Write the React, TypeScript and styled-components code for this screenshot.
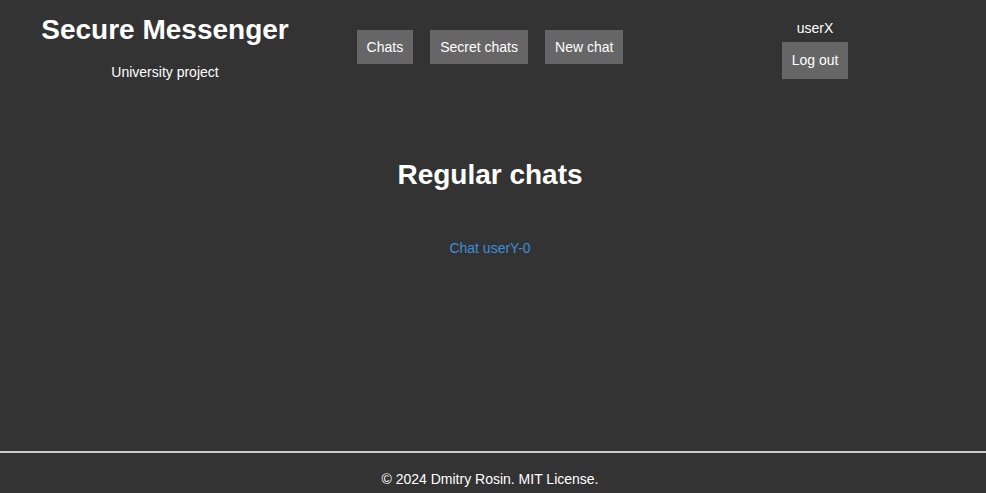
import React from "react";
import styled, { createGlobalStyle } from "styled-components";

const GlobalStyle = createGlobalStyle`
  html, body {
    margin: 0;
    padding: 0;
    background: #333333;
    color: #ffffff;
    font-family: "Liberation Sans", Arial, sans-serif;
  }
  * { box-sizing: border-box; }
`;

const Page = styled.div`
  min-height: 100vh;
  display: flex;
  flex-direction: column;
  background: #333333;
`;

const Header = styled.header`
  display: grid;
  grid-template-columns: 330px 320px 330px;
  align-items: start;
  padding: 14px 0 0;
  height: 80px;
`;

const Brand = styled.div`
  display: flex;
  flex-direction: column;
  align-items: center;
`;

const Title = styled.h1`
  margin: 0;
  font-size: 28px;
  line-height: 32px;
  font-weight: 700;
  color: #ffffff;
`;

const Subtitle = styled.p`
  margin: 18px 0 0;
  font-size: 14px;
  line-height: 16px;
`;

const Nav = styled.nav`
  display: flex;
  justify-content: center;
  gap: 17px;
  padding-top: 16px;
`;

const Button = styled.button<{ $tall?: boolean }>`
  background: #666666;
  color: #ffffff;
  border: none;
  border-radius: 0;
  font-family: "Liberation Sans", Arial, sans-serif;
  font-size: 14px;
  line-height: 16px;
  padding: ${(p) => (p.$tall ? "10px 10px 11px" : "9px 10px")};
  cursor: pointer;
`;

const User = styled.div`
  display: flex;
  flex-direction: column;
  align-items: center;
  gap: 6px;
  padding-top: 6px;
`;

const UserName = styled.span`
  font-size: 14px;
  line-height: 16px;
`;

const Main = styled.main`
  flex: 1;
  display: flex;
  flex-direction: column;
  align-items: center;
  padding-right: 6px;
`;

const SectionTitle = styled.h2`
  margin: 79px 0 0;
  font-size: 28px;
  line-height: 32px;
  font-weight: 700;
`;

const ChatLink = styled.a`
  margin-top: 49px;
  font-size: 14px;
  line-height: 16px;
  color: #3b8edb;
  text-decoration: none;
`;

const Footer = styled.footer`
  border-top: 2px solid #cccccc;
  padding: 18px 6px 6px 0;
  text-align: center;
  font-size: 14px;
  line-height: 16px;
`;

export default function App() {
  return (
    <>
      <GlobalStyle />
      <Page>
        <Header>
          <Brand>
            <Title>Secure Messenger</Title>
            <Subtitle>University project</Subtitle>
          </Brand>
          <Nav>
            <Button>Chats</Button>
            <Button>Secret chats</Button>
            <Button>New chat</Button>
          </Nav>
          <User>
            <UserName>userX</UserName>
            <Button $tall>Log out</Button>
          </User>
        </Header>
        <Main>
          <SectionTitle>Regular chats</SectionTitle>
          <ChatLink href="#">Chat userY-0</ChatLink>
        </Main>
        <Footer>© 2024 Dmitry Rosin. MIT License.</Footer>
      </Page>
    </>
  );
}
